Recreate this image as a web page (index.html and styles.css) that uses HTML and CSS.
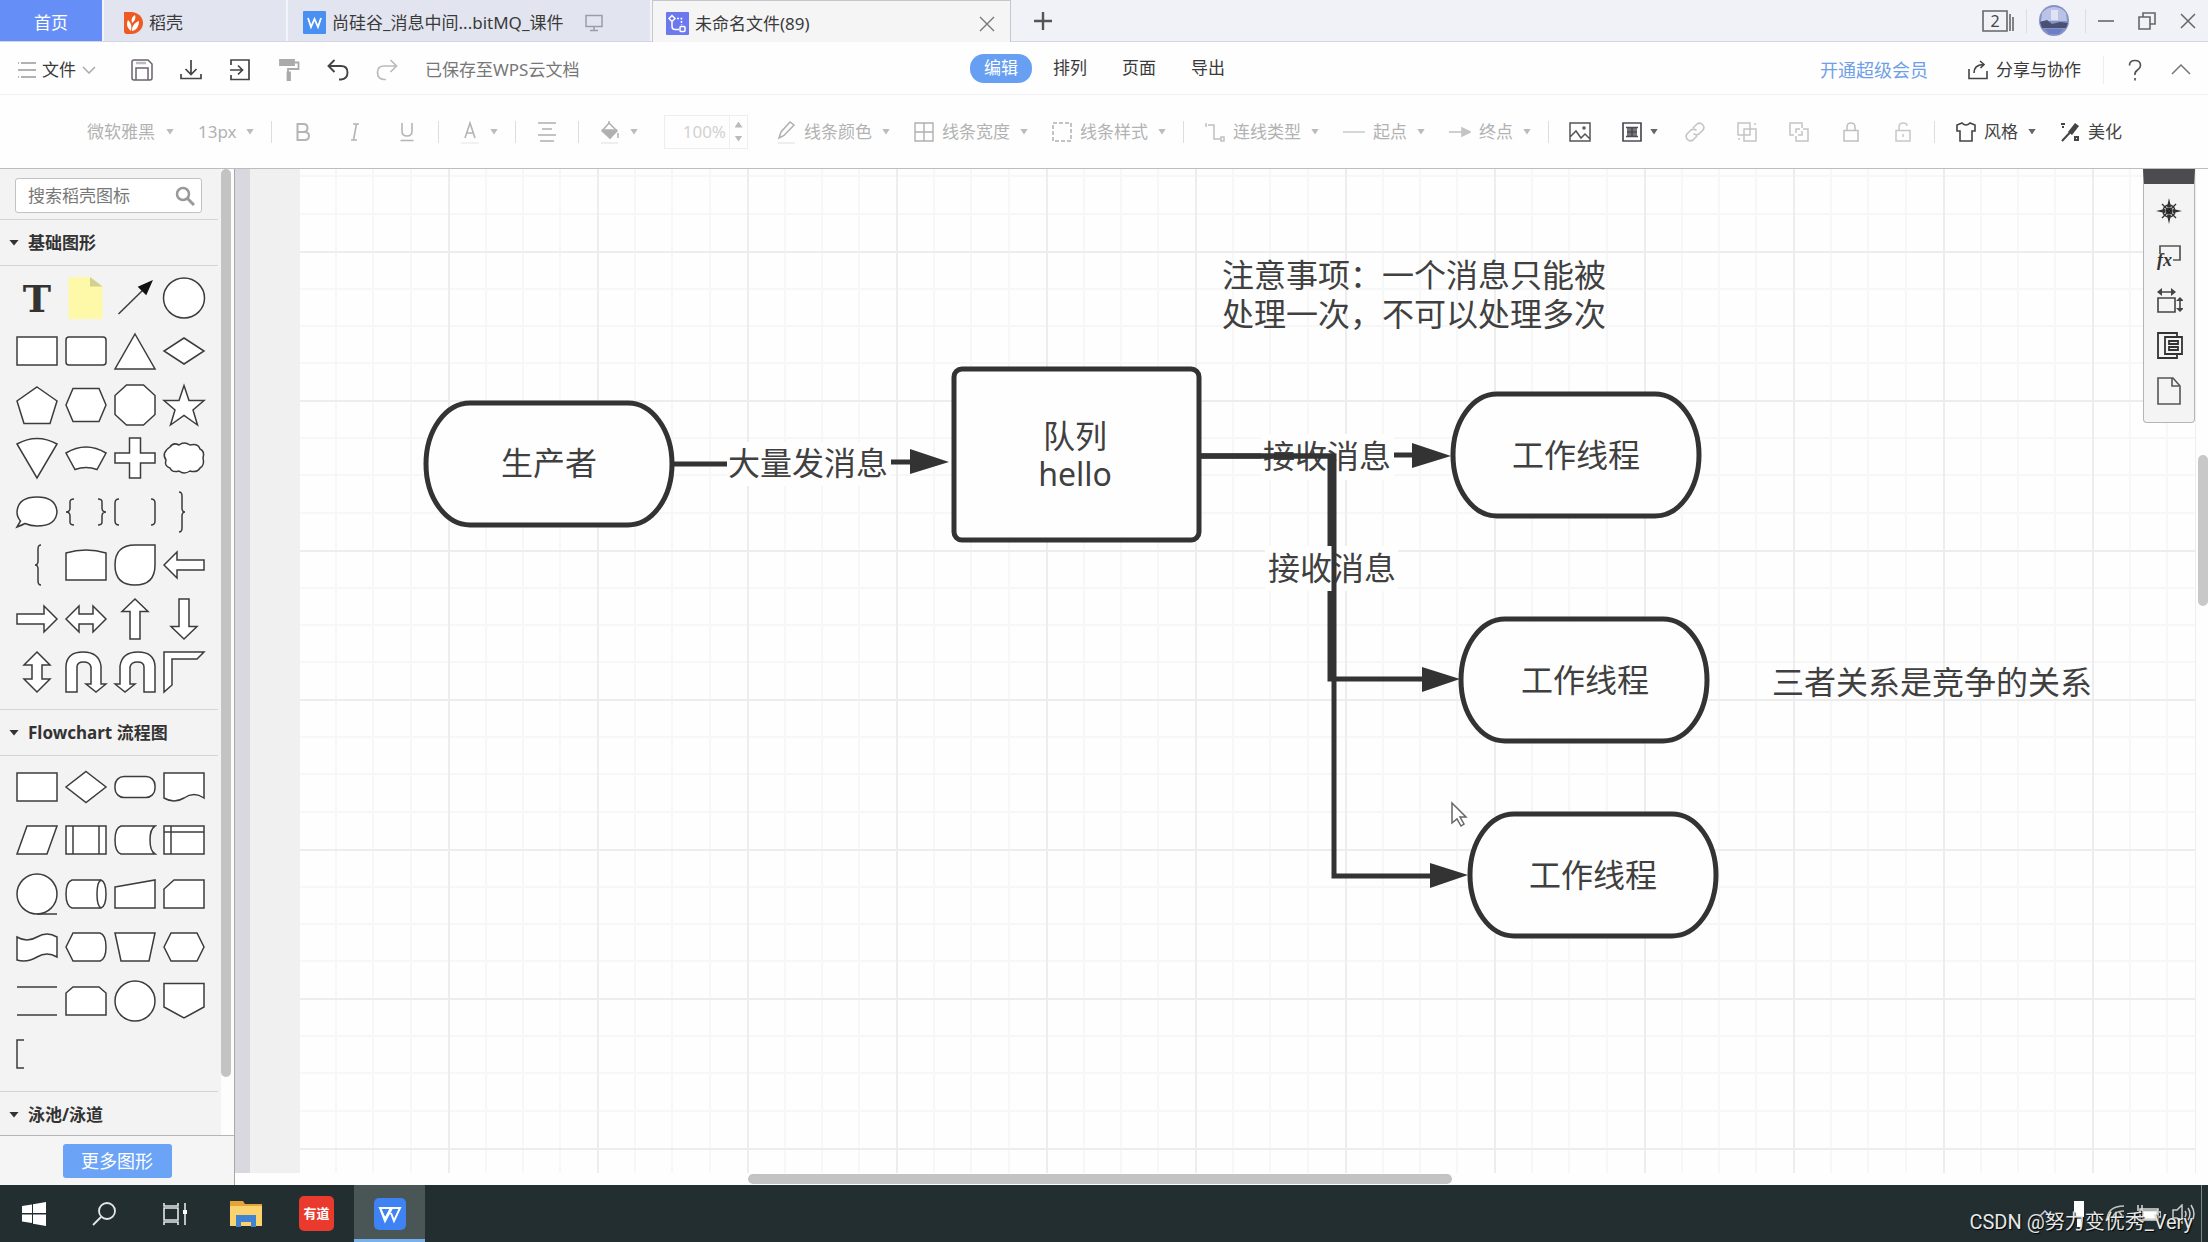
FILE: index.html
```html
<!DOCTYPE html>
<html lang="zh-CN">
<head>
<meta charset="utf-8">
<title>未命名文件(89)</title>
<link rel="stylesheet" href="styles.css">
</head>
<body>
<header class="tabbar">
  <a class="tab tab-home" href="#">首页</a>
  <a class="tab tab-docer" href="#">
    <svg class="ic" width="20" height="24" viewBox="0 0 20 24"><path d="M1 1h7c7 0 12 5 12 11s-5 11-12 11H4c-2 0-3-1-3-3z" fill="#ee5a24"/><path d="M8 20c-4-3-5-7-3-11 3 3 4 6 3 11zm1 0c0-5 2-8 7-10 0 5-2 9-7 10zm0-8c-1-4 0-6 3-8 1 3 0 6-3 8z" fill="#fff"/></svg>
    <span>稻壳</span>
  </a>
  <a class="tab tab-doc" href="#">
    <svg class="ic" width="23" height="23" viewBox="0 0 23 23"><rect width="23" height="23" rx="1" fill="#4a90f0"/><path d="M5 7l3 9 3.500-8 3.500 8 3-9" fill="none" stroke="#fff" stroke-width="1.800"/></svg>
    <span>尚硅谷_消息中间...bitMQ_课件</span>
    <svg class="ic monitor" width="18" height="18" viewBox="0 0 18 18" fill="none" stroke="#9a9ca6" stroke-width="1.500"><path d="M1 1.500h16v11H1zM9 13v3M5 16.500h8"/></svg>
  </a>
  <a class="tab tab-active" href="#">
    <svg class="ic" width="23" height="23" viewBox="0 0 23 23"><rect width="23" height="23" rx="1" fill="#6b78ee"/><g fill="none" stroke="#fff" stroke-width="1.500"><path d="M6 3.500l3 3-3 3-3-3zM6 9.500v5q0 3 3 3h4"/><rect x="14" y="14.500" width="5" height="5" rx="1"/><path d="M11 6.500h4.500V13" stroke-dasharray="2 1.500"/></g></svg>
    <span>未命名文件(89)</span>
    <svg class="ic tab-close" width="16" height="16" viewBox="0 0 16 16" stroke="#777" stroke-width="1.400"><path d="M1 1l14 14M15 1L1 15"/></svg>
  </a>
  <button class="tab-add" aria-label="新建"><svg width="18" height="18" viewBox="0 0 18 18" stroke="#555" stroke-width="2.400"><path d="M9 0v18M0 9h18"/></svg></button>
  <div class="window-tools">
    <button class="plain" aria-label="窗口列表"><svg width="32" height="22" viewBox="0 0 32 22" fill="none" stroke="#666" stroke-width="1.600"><path d="M1 1h24v20H1zM28 4v17M31 7v14"/><text x="13" y="17" text-anchor="middle" class="count">2</text></svg></button>
    <span class="vline"></span>
    <svg class="avatar" width="30" height="31" viewBox="0 0 30 31"><ellipse cx="15" cy="15.500" rx="15" ry="15.500" fill="#8792c4"/><path d="M3 8a15 15 0 0 1 24 0l1 8H2z" fill="#b9c3e8"/><path d="M12 5h7v10h-7z" fill="#dfe3f2"/><path d="M1 17l7-2 5 4 8-2 8 1-2 5H3z" fill="#4a5073"/><path d="M6 24h18l-4 5H10z" fill="#6e7ec6"/></svg>
    <span class="vline"></span>
    <button class="plain" aria-label="最小化"><svg width="16" height="16" viewBox="0 0 16 16" stroke="#666" stroke-width="1.600"><path d="M0 8h16"/></svg></button>
    <button class="plain" aria-label="还原"><svg width="18" height="18" viewBox="0 0 18 18" fill="none" stroke="#666" stroke-width="1.600"><path d="M1 5h11v12H1zM5 5V1h12v11h-5"/></svg></button>
    <button class="plain" aria-label="关闭"><svg width="16" height="16" viewBox="0 0 16 16" stroke="#666" stroke-width="1.500"><path d="M1 1l14 14M15 1L1 15"/></svg></button>
  </div>
</header>

<div class="menubar">
  <div class="menu-left">
    <button class="file-menu">
      <svg width="18" height="16" viewBox="0 0 18 16" stroke="#999" stroke-width="1.300"><path d="M3 1h15M0 8h18M3 15h15M0 1h1M0 15h1"/></svg>
      <span>文件</span>
      <svg class="chev" width="14" height="8" viewBox="0 0 14 8" fill="none" stroke="#aaa" stroke-width="1.500"><path d="M1 1l6 6 6-6"/></svg>
    </button>
    <button class="quick" aria-label="保存"><svg width="22" height="22" viewBox="0 0 22 22" fill="none" stroke="#6b626e" stroke-width="1.500"><path d="M1 3q0-2 2-2h14l4 4v14q0 2-2 2H3q-2 0-2-2zM5 21V9h12v12"/><path d="M5 4h10" stroke="#bbb" stroke-width="2.500"/></svg></button>
    <button class="quick" aria-label="下载"><svg width="22" height="22" viewBox="0 0 22 22" fill="none" stroke="#444" stroke-width="1.700"><path d="M11 1v14M5.500 10l5.500 5.500 5.500-5.500M1 15v4.500h20V15"/></svg></button>
    <button class="quick" aria-label="输出"><svg width="22" height="22" viewBox="0 0 22 22" fill="none" stroke="#444" stroke-width="1.700"><path d="M2 6V1h18v19.500H2V16M1 11h12M9 6.500l4.500 4.500L9 15.500"/></svg></button>
    <button class="quick" aria-label="格式刷"><svg width="22" height="22" viewBox="0 0 22 22" fill="none" stroke="#aaa" stroke-width="1.800"><path d="M2 1h14v5H2z" fill="#aaa"/><path d="M17 3.500h3.500V10H10v4"/><path d="M9.500 13.500h2.500v7.500H9.500z" fill="#aaa"/></svg></button>
    <button class="quick" aria-label="撤销"><svg width="22" height="22" viewBox="0 0 22 22" fill="none" stroke="#444" stroke-width="1.900"><path d="M7.500 1L1.500 7l6 6M2 7h12q6.500 0 6.500 6.500T14 20.500h-2"/></svg></button>
    <button class="quick" aria-label="重做"><svg width="22" height="22" viewBox="0 0 22 22" fill="none" stroke="#bbb" stroke-width="1.700"><path d="M14.500 1l6 6-6 6M20 7H8Q1.500 7 1.500 13.500T8 20.500h2"/></svg></button>
    <span class="saved">已保存至WPS云文档</span>
  </div>
  <nav class="menu-tabs">
    <button class="mtab mtab-on">编辑</button>
    <button class="mtab">排列</button>
    <button class="mtab">页面</button>
    <button class="mtab">导出</button>
  </nav>
  <div class="menu-right">
    <a class="vip" href="#">开通超级会员</a>
    <button class="share">
      <svg width="20" height="20" viewBox="0 0 20 20" fill="none" stroke="#444" stroke-width="1.600"><path d="M1 9v9.500h18V11M6 13q0-8 9-8.500M12 1l4 3.500L12.500 8"/></svg>
      <span>分享与协作</span>
    </button>
    <span class="vline"></span>
    <button class="plain" aria-label="帮助"><svg width="14" height="22" viewBox="0 0 14 22" fill="none" stroke="#555" stroke-width="1.700"><path d="M1.500 6.500Q1.500 1.500 7 1.500t5.500 5Q12.500 9 9.500 11T7 16M7 19v2.500"/></svg></button>
    <button class="plain" aria-label="收起"><svg width="20" height="11" viewBox="0 0 20 11" fill="none" stroke="#777" stroke-width="1.500"><path d="M1 10l9-9 9 9"/></svg></button>
  </div>
</div>

<div class="toolbar">
  <label class="drop"><select class="pick pick-font" aria-label="字体"><option>微软雅黑</option></select><i class="caret"></i></label>
  <label class="drop"><select class="pick pick-size" aria-label="字号"><option>13px</option></select><i class="caret"></i></label>
  <span class="sep"></span>
  <button class="tool" aria-label="加粗"><svg width="20" height="20" viewBox="0 0 20 20" fill="none" stroke="#b4b4b4" stroke-width="2"><path d="M4.500 2h6q4 0 4 4t-4 4h-6zM4.500 10h7q4.500 0 4.500 4t-4.500 4h-7z"/></svg></button>
  <button class="tool" aria-label="倾斜"><svg width="20" height="20" viewBox="0 0 20 20" fill="none" stroke="#b4b4b4" stroke-width="1.600"><path d="M8 2h6M6 18h6M11.500 2l-3 16"/></svg></button>
  <button class="tool" aria-label="下划线"><svg width="20" height="20" viewBox="0 0 20 20" fill="none" stroke="#b4b4b4" stroke-width="1.600"><path d="M5 1v8q0 5 5 5t5-5V1M3.500 18.500h13"/></svg></button>
  <span class="sep"></span>
  <button class="drop" aria-label="文字颜色"><svg width="20" height="24" viewBox="0 0 20 24" fill="none" stroke="#b4b4b4" stroke-width="1.600"><path d="M5 18l5-15 5 15M6.500 13h7"/><path d="M1 23h18" stroke="#eee"/></svg><i class="caret"></i></button>
  <span class="sep"></span>
  <button class="tool" aria-label="对齐"><svg width="20" height="20" viewBox="0 0 20 20" stroke="#b0b0b0" stroke-width="1.500"><path d="M1 1h18M5 7h10M1 13h18M3 19h14"/></svg></button>
  <span class="sep"></span>
  <button class="drop" aria-label="填充"><svg width="20" height="24" viewBox="0 0 20 24" fill="none" stroke="#b0b0b0" stroke-width="1.500"><path d="M9 3l8 8-7 7-8-7z"/><path d="M3 10h13l-6 8z" fill="#b0b0b0"/><path d="M9 3V1M18 13v5" /><path d="M1 23h17" stroke="#e8e8e8"/></svg><i class="caret"></i></button>
  <div class="spin"><input type="text" value="100%" aria-label="不透明度"><span class="steps"><i class="caret up"></i><i class="caret"></i></span></div>
  <button class="drop"><svg width="20" height="24" viewBox="0 0 20 24" fill="none" stroke="#b0b0b0" stroke-width="1.500"><path d="M3 18l2-6L14 2l4 3L8 15.500z"/><path d="M2 23h17" stroke="#e8e8e8"/></svg><span>线条颜色</span><i class="caret"></i></button>
  <button class="drop"><svg width="20" height="20" viewBox="0 0 20 20" fill="none" stroke="#b0b0b0" stroke-width="1.400"><path d="M1 1h18v18H1zM10 1v18M1 10h18"/></svg><span>线条宽度</span><i class="caret"></i></button>
  <button class="drop"><svg width="20" height="20" viewBox="0 0 20 20" fill="none" stroke="#b0b0b0" stroke-width="1.500" stroke-dasharray="4 2"><path d="M1 1h18v18H1z"/></svg><span>线条样式</span><i class="caret"></i></button>
  <span class="sep"></span>
  <button class="drop"><svg width="20" height="20" viewBox="0 0 20 20" fill="none" stroke="#c0c0c0" stroke-width="1.500"><path d="M1 1v3h1M3 3h6v14h7M16 15h3v4h-3z"/></svg><span>连线类型</span><i class="caret"></i></button>
  <button class="drop"><svg width="22" height="20" viewBox="0 0 22 20" stroke="#ccc" stroke-width="1.600"><path d="M0 10h22"/></svg><span>起点</span><i class="caret"></i></button>
  <button class="drop"><svg width="22" height="20" viewBox="0 0 22 20" stroke="#c4c4c4" stroke-width="1.600"><path d="M0 10h16"/><path d="M13 6l8 4-8 4z" fill="#c4c4c4"/></svg><span>终点</span><i class="caret"></i></button>
  <span class="sep"></span>
  <button class="tool" aria-label="图片"><svg width="22" height="20" viewBox="0 0 22 20" fill="none" stroke="#555" stroke-width="1.500"><path d="M1 1h20v18H1zM1 15l6-6 5 7 4-4 5 5"/><circle cx="15" cy="6" r="1"/></svg></button>
  <button class="tool" aria-label="容器"><svg width="20" height="20" viewBox="0 0 20 20" fill="none" stroke="#4c4c55" stroke-width="1.700"><path d="M1 1h18v18H1z"/><path d="M5 5h10v10H5z" fill="#777" stroke="none"/><path d="M4 5.500h12M5 10h10M4 14.500h12M10 5v10"/></svg><i class="caret dark"></i></button>
  <button class="tool link" aria-label="链接"><svg width="20" height="20" viewBox="0 0 20 20" fill="none" stroke="#c4c4c4" stroke-width="1.600"><path d="M8 6l4-4q3-2 5.500.5T18 8l-4 4q-3 2-5.500-.5M12 14l-4 4q-3 2-5.500-.5T2 12l4-4q3-2 5.500.5"/></svg></button>
  <button class="tool" aria-label="组合"><svg width="20" height="20" viewBox="0 0 20 20" fill="none" stroke="#c4c4c4" stroke-width="1.500"><path d="M1 1h12v12H1zM7 7h12v12H7z"/><path d="M18 1v2M1 17h2"/></svg></button>
  <button class="tool" aria-label="取消组合"><svg width="20" height="20" viewBox="0 0 20 20" fill="none" stroke="#c4c4c4" stroke-width="1.500"><path d="M5 13H1V1h12v5M14 7h5v12H7v-5M7 11V7h4M13 9v4H9"/></svg></button>
  <button class="tool" aria-label="锁定"><svg width="16" height="20" viewBox="0 0 16 20" fill="none" stroke="#c0c0c0" stroke-width="1.500"><path d="M1 8.500h14V19H1zM4 8V5q0-4 4-4t4 4v3"/></svg></button>
  <button class="tool" aria-label="解锁"><svg width="16" height="20" viewBox="0 0 16 20" fill="none" stroke="#c8c8c8" stroke-width="1.500"><path d="M1 8.500h14V19H1zM4 8V5q0-4 4-4t4 3M8 12v3"/></svg></button>
  <span class="sep"></span>
  <button class="drop strong"><svg width="20" height="20" viewBox="0 0 20 20" fill="none" stroke="#444" stroke-width="1.600"><path d="M6 1L1 3v6h3v10h12V9h3V3l-5-2q-4 4-8 0z"/></svg><span>风格</span><i class="caret dark"></i></button>
  <button class="drop strong"><svg width="20" height="20" viewBox="0 0 20 20" fill="none" stroke="#444" stroke-width="2"><path d="M2 19L16 4"/><path d="M8 10l7-9 4 3-7 9z" fill="#444" stroke="none"/><path d="M1 2h4M2 5h2M15 15h3v3h-3z"/></svg><span>美化</span></button>
</div>

<main class="workspace">
  <aside class="sidebar">
    <div class="library">
      <div class="lib-content">
        <div class="search"><div class="search-box"><input type="text" placeholder="搜索稻壳图标" aria-label="搜索稻壳图标"><svg width="20" height="20" viewBox="0 0 20 20" fill="none" stroke="#999" stroke-width="2.500"><circle cx="8" cy="8" r="6"/><path d="M12.500 12.500L19 19" stroke-width="3"/></svg></div></div>
        <h2 class="lib-title"><i class="fold"></i>基础图形</h2>
        <div class="shapes shapes-basic">
          <svg viewBox="0 0 44 44"><text x="22" y="36" class="glyph-t">T</text></svg>
          <svg viewBox="0 0 44 44"><path d="M4.500 1h22l12 9v33h-34z" fill="#fdf9a9" stroke="none"/><path d="M26 1l12.500 9.500H26z" fill="#d3cf92" stroke="none"/></svg>
          <svg viewBox="0 0 44 44"><path d="M5.500 38L30 14"/><path d="M38.500 5.500L33 18l-7-7z" fill="#111" stroke="#111"/></svg>
          <svg viewBox="0 0 44 44"><ellipse cx="22" cy="22" rx="20.500" ry="20"/></svg>
          <svg viewBox="0 0 44 44"><path d="M2 8h40v28H2z"/></svg>
          <svg viewBox="0 0 44 44"><rect x="2" y="8" width="40" height="28" rx="3"/></svg>
          <svg viewBox="0 0 44 44"><path d="M22 5l20 35H2z"/></svg>
          <svg viewBox="0 0 44 44"><path d="M22 9l20 13-20 13L2 22z"/></svg>
          <svg viewBox="0 0 44 44"><path d="M22 4l20 14-7 22.500H9L2 18z"/></svg>
          <svg viewBox="0 0 44 44"><path d="M2 22L9 5.500h26L42 22l-7 16.500H9z"/></svg>
          <svg viewBox="0 0 44 44"><path d="M13.500 2h17L42 12.500v19L30.500 42h-17L2 31.500v-19z"/></svg>
          <svg viewBox="0 0 44 44"><path d="M22 2.500l5 15h15L31 27l4.500 15L22 32.500 8.500 42 13 27 2 17.500h15z"/></svg>
          <svg viewBox="0 0 44 44"><path d="M2 8Q22-3 42 8L22 42z"/></svg>
          <svg viewBox="0 0 44 44"><path d="M2 17Q22 5 42 17l-9 16.500q-11-4-22 0z"/></svg>
          <svg viewBox="0 0 44 44"><path d="M16.500 2h11v15H42v10H27.500v15h-11V27H2V17h14.500z"/></svg>
          <svg viewBox="0 0 44 44"><path d="M8 11q3-5 9-2 5-4 11 0 8-2 10 4 5 2 3 9 2 7-3 10-3 5-10 3-6 4-11 0-7 2-9-3-6-2-4-8-5-7 4-13z"/></svg>
          <svg viewBox="0 0 44 44"><path d="M2 37l3.500-6Q2 27 2 22 3 7 22 7t20 15q-1 14-20 14-6 0-12-2.500Q7 35 2 37z"/></svg>
          <svg viewBox="0 0 44 44"><path fill="none" d="M10 9q-4 0-4 3v6q0 4-4 4 4 0 4 4v6q0 3 4 3M34 9q4 0 4 3v6q0 4 4 4-4 0-4 4v6q0 3-4 3"/></svg>
          <svg viewBox="0 0 44 44"><path fill="none" d="M6 9q-4 0-4 4v18q0 4 4 4M38 9q4 0 4 4v18q0 4-4 4"/></svg>
          <svg viewBox="0 0 44 44"><path fill="none" d="M17 2q3 0 3 4v12q0 4 3 4-3 0-3 4v12q0 4-3 4"/></svg>
          <svg viewBox="0 0 44 44"><path fill="none" d="M26 2q-3 0-3 4v12q0 4-3 4 3 0 3 4v12q0 4 3 4"/></svg>
          <svg viewBox="0 0 44 44"><path d="M2 10Q22 4 42 10v27H2z"/></svg>
          <svg viewBox="0 0 44 44"><path d="M22 2h20v20q0 20-20 20T2 22Q2 2 22 2z"/></svg>
          <svg viewBox="0 0 44 44"><path d="M2 22L15 9v8h27v10H15v8z"/></svg>
          <svg viewBox="0 0 44 44"><path d="M42 22L29 9v8H2v10h27v8z"/></svg>
          <svg viewBox="0 0 44 44"><path d="M2 22L15 9v8h14V9l13 13-13 13v-8H15v8z"/></svg>
          <svg viewBox="0 0 44 44"><path d="M22 2l13 12.500h-8V42H17V14.500H9z"/></svg>
          <svg viewBox="0 0 44 44"><path d="M22 42l13-12.500h-8V2H17v27.500H9z"/></svg>
          <svg viewBox="0 0 44 44"><path d="M22 2l13 13h-8v14h8L22 42 9 29h8V15H9z"/></svg>
          <svg viewBox="0 0 44 44"><path d="M2 42V16Q3 2 19 2t18 14v18h5l-10 8-10-8h5V17q-1-5-7.500-5T13 17v25z"/></svg>
          <svg viewBox="0 0 44 44"><path d="M42 42V16Q41 2 25 2T7 16v18H2l10 8 10-8h-5V17q1-5 7.500-5t6.500 5v25z"/></svg>
          <svg viewBox="0 0 44 44"><path d="M2 2h40l-7 7H10v26l-8 7z"/></svg>
        </div>
        <h2 class="lib-title"><i class="fold"></i>Flowchart 流程图</h2>
        <div class="shapes shapes-flow">
          <svg viewBox="0 0 44 44"><path d="M2 8h40v28H2z"/></svg>
          <svg viewBox="0 0 44 44"><path d="M22 6.500l20 15.500-20 15.500L2 22z"/></svg>
          <svg viewBox="0 0 44 44"><rect x="2" y="11.500" width="40" height="21" rx="9"/></svg>
          <svg viewBox="0 0 44 44"><path d="M2 8h40v25q-10-7-20 0-10 6-20 0z"/></svg>
          <svg viewBox="0 0 44 44"><path d="M12 8h30l-10 28H2z"/></svg>
          <svg viewBox="0 0 44 44"><path d="M2 8h40v28H2zM9 8v28M35 8v28"/></svg>
          <svg viewBox="0 0 44 44"><path d="M42 8H8q-6 2-6 14t6 14h34q-5-3-5-14t5-14z"/></svg>
          <svg viewBox="0 0 44 44"><path d="M2 8h40v28H2zM9 8v28M2 14h40"/></svg>
          <svg viewBox="0 0 44 44"><circle cx="22" cy="22" r="20"/><path d="M22 42h20"/></svg>
          <svg viewBox="0 0 44 44"><path d="M8 8h29q5 2 5 14t-5 14H8q-6-2-6-14T8 8z"/><path fill="none" d="M37 8q-4 2-4 14t4 14"/></svg>
          <svg viewBox="0 0 44 44"><path d="M2 15l40-7v28H2z"/></svg>
          <svg viewBox="0 0 44 44"><path d="M12 8h30v28H2V17z"/></svg>
          <svg viewBox="0 0 44 44"><path d="M2 12q10 6 20 0t20 0v20q-10-6-20 0t-20 3z"/></svg>
          <svg viewBox="0 0 44 44"><path d="M2 22L9 8h27q6 2 6 14t-6 14H9z"/></svg>
          <svg viewBox="0 0 44 44"><path d="M2 8h40l-6 28H8z"/></svg>
          <svg viewBox="0 0 44 44"><path d="M2 22L9 8h26l7 14-7 14H9z"/></svg>
          <svg viewBox="0 0 44 44"><path d="M2 8h40M2 36h40"/></svg>
          <svg viewBox="0 0 44 44"><path d="M9 8h26l7 6v22H2V14z"/></svg>
          <svg viewBox="0 0 44 44"><circle cx="22" cy="22" r="20"/></svg>
          <svg viewBox="0 0 44 44"><path d="M2 4.500h40V28L22 39 2 28z"/></svg>
          <svg viewBox="0 0 44 44"><path fill="none" d="M9 8H2v28h7"/></svg>
        </div>
        <h2 class="lib-title"><i class="fold"></i>泳池/泳道</h2>
      </div>
      <div class="lib-scroll"><i class="lib-thumb"></i></div>
    </div>
    <div class="lib-footer"><button class="more">更多图形</button></div>
  </aside>

  <section class="editor">
    <div class="editor-row">
      <div class="rail"></div>
      <div class="gutter"></div>
      <div class="canvas">
        <svg class="diagram" width="100%" height="100%">
          <defs>
            <pattern id="grid" x="448" y="251" width="299" height="299" patternUnits="userSpaceOnUse">
              <path class="minor" d="M38 0v299M75 0v299M112 0v299M187 0v299M224 0v299M262 0v299M0 38h299M0 75h299M0 112h299M0 187h299M0 224h299M0 262h299"/>
              <path class="major" d="M1 0v299M150 0v299M0 1h299M0 150h299"/>
            </pattern>
          </defs>
          <g transform="translate(-300 -169)">
            <rect x="300" y="169" width="100%" height="100%" fill="url(#grid)"/>
            <g class="wire">
              <path d="M673 464h54M891 462h21"/>
              <path class="head" d="M910 449l39 13-39 12z"/>
              <path d="M1200 456h70M1394 455h20"/>
              <path class="head" d="M1412 443l39 13-39 12z"/>
            </g>
            <g class="node">
              <path d="M470 403H628A44 61 0 0 1 628 525H470A44 61 0 0 1 470 403z"/>
              <rect x="954" y="369" width="245" height="171" rx="8"/>
              <path d="M1497 394H1655A44 61 0 0 1 1655 516H1497A44 61 0 0 1 1497 394z"/>
              <path d="M1505 619H1663A44 61 0 0 1 1663 741H1505A44 61 0 0 1 1505 619z"/>
              <path d="M1514 814H1672A44 61 0 0 1 1672 936H1514A44 61 0 0 1 1514 814z"/>
            </g>
            <rect class="plate" x="727" y="442" width="164" height="44"/>
            <rect class="plate" x="1261" y="434" width="133" height="46"/>
            <g class="words">
              <text x="549" y="475">生产者</text>
              <text x="808" y="475">大量发消息</text>
              <text x="1075" y="448">队列</text>
              <text x="1075" y="486">hello</text>
              <text x="1327" y="468">接收消息</text>
              <text x="1576" y="467">工作线程</text>
              <text x="1585" y="692">工作线程</text>
              <text x="1593" y="887">工作线程</text>
              <text x="1932" y="694">三者关系是竞争的关系</text>
              <text x="1414" y="287">注意事项：一个消息只能被</text>
              <text x="1414" y="326">处理一次，不可以处理多次</text>
            </g>
            <g class="wire">
              <path d="M1200 456h130v223h94"/>
              <path class="head" d="M1422 667l38 12-38 13z"/>
            </g>
            <rect class="plate" x="1265" y="546" width="133" height="45"/>
            <g class="words"><text x="1332" y="580">接收消息</text></g>
            <g class="wire">
              <path d="M1200 456h134v420h98"/>
              <path class="head" d="M1430 863l38 12-38 13z"/>
            </g>
            <path class="pointer" d="M1452 803v20l5-4 4 7 3-2-4-7h6z"/>
          </g>
        </svg>
        <div class="dock">
          <button aria-label="导航"><svg width="28" height="28" viewBox="0 0 28 28" fill="none" stroke="#333" stroke-width="1.400"><circle cx="14" cy="14" r="6"/><circle cx="14" cy="14" r="3" fill="#111"/><path d="M14 1l2 9h-4zM14 27l2-9h-4zM1 14l9-2v4zM27 14l-9-2v4z" fill="#333" stroke="none"/><path d="M7 7l14 14M21 7L7 21"/></svg></button>
          <button aria-label="公式"><svg width="28" height="28" viewBox="0 0 28 28" fill="none" stroke="#555" stroke-width="1.700"><path d="M5 12V4h20v14h-7"/><text x="2" y="24" class="fx">fx</text></svg></button>
          <button aria-label="尺寸"><svg width="28" height="28" viewBox="0 0 28 28" fill="none" stroke="#444" stroke-width="1.600"><path d="M3 11h17v14H3zM3 5h17M25 11v13"/><path d="M7 1L2 5l5 4zM16 1l5 4-5 4zM21 14l4-4 4 4zM21 21l4 4 4-4z" fill="#444" stroke="none"/></svg></button>
          <button aria-label="数据"><svg width="28" height="28" viewBox="0 0 28 28" fill="none" stroke="#333" stroke-width="1.800"><path d="M22 5V1H3v25h19v-3"/><path d="M10 5h17v17H10zM14 9h9v3h-9zM14 15h9v3h-9z"/></svg></button>
          <button aria-label="页面"><svg width="28" height="28" viewBox="0 0 28 28" fill="none" stroke="#555" stroke-width="1.600"><path d="M3 1h15l7 8v18H3z"/><path d="M17 1v8h7"/></svg></button>
        </div>
      </div>
      <div class="vscroll"><i class="vthumb"></i></div>
    </div>
    <div class="hscroll"><i class="hthumb"></i></div>
  </section>
</main>

<footer class="taskbar">
  <button class="task" aria-label="开始"><svg width="24" height="24" viewBox="0 0 24 24" fill="#fff"><path d="M0 4l10-1.500V11H0zM11 2.300L24 0v11H11zM0 12.500h10V21L0 19.500zM11 12.500h13V24l-13-2.300z"/></svg></button>
  <button class="task" aria-label="搜索"><svg width="24" height="24" viewBox="0 0 24 24" fill="none" stroke="#e4e8e8" stroke-width="1.800"><circle cx="15" cy="9" r="8"/><path d="M9 15l-8 8"/></svg></button>
  <button class="task" aria-label="任务视图"><svg width="24" height="24" viewBox="0 0 24 24" fill="none" stroke="#e4e8e8" stroke-width="1.600"><path d="M1 6h14v12H1zM1 1v3h14V1M1 23v-3h14v3M22 1v7M22 12v11"/><path d="M20 8h4v4h-4z" fill="#fff" stroke="none"/></svg></button>
  <button class="task" aria-label="文件资源管理器"><svg width="32" height="26" viewBox="0 0 32 26"><path d="M0 0h13l2 3h17v22H0z" fill="#e5a33a"/><path d="M0 5h32v20H0z" fill="#fad36e"/><path d="M6 14h20v12h-5v-5H11v5H6z" fill="#3f83d2"/></svg></button>
  <button class="task" aria-label="有道"><span class="youdao">有道</span></button>
  <button class="task task-on" aria-label="WPS"><svg width="32" height="32" viewBox="0 0 32 32"><rect width="32" height="32" rx="5" fill="#3f82f4"/><path d="M6 10h11l-6 11zM6 10l5 13 7-13h8l-6 13-3-8" fill="none" stroke="#fff" stroke-width="2"/></svg></button>
  <div class="tray">
    <svg width="14" height="8" viewBox="0 0 14 8" fill="none" stroke="#ccd" stroke-width="1.500"><path d="M1 7l6-6 6 6"/></svg>
    <svg class="usb" width="12" height="26" viewBox="0 0 12 26"><path d="M1 0h10v16H8v10H4V16H1z" fill="#fff"/></svg>
    <svg width="20" height="20" viewBox="0 0 20 20" fill="none" stroke="#bcc4c4" stroke-width="1.500"><path d="M1 17Q1 2 18 2M6 18Q6 7 18 7M11 18q0-6 7-6"/></svg>
    <svg width="24" height="20" viewBox="0 0 24 20" fill="none" stroke="#ddd" stroke-width="1.500"><path d="M3 5h18v11H3zM22 8h2v5h-2M1 1v6M5 1v6"/><path d="M6 7h14v8H6z" fill="#fff"/></svg>
    <svg width="24" height="20" viewBox="0 0 24 20" fill="none" stroke="#ccc" stroke-width="1.500"><path d="M1 6h4l5-5v18l-5-5H1zM13 7q2 3 0 6M16 4q4 6 0 12M19 1q6 9 0 18"/></svg>
  </div>
  <p class="credit">CSDN @努力变优秀_Very</p>
</footer>
</body>
</html>
```
FILE: styles.css
```css
* { box-sizing: border-box; }
body {
  margin: 0;
  height: 100vh;
  display: flex;
  flex-direction: column;
  overflow: hidden;
  background: #fefefe;
  color: #3a3a3a;
  font: 17px/24px "Noto Sans", "Noto Sans CJK SC", sans-serif;
}
button, input, select { font: inherit; color: inherit; }
button { display: flex; align-items: center; justify-content: center; padding: 0; border: 0; background: none; white-space: nowrap; }
a { color: inherit; text-decoration: none; }
svg { flex: none; display: block; }

/* document tabs */
.tabbar { display: flex; flex: none; height: 42px; background: #f1f2f8; border-bottom: 1px solid #d3d6e0; }
.tab { display: flex; align-items: center; gap: 6px; white-space: nowrap; background: #e2e5ef; border-right: 2px solid #f3f4f9; padding-top: 4px; }
.tab-home { width: 104px; justify-content: center; background: #658ff6; color: #fff; }
.tab-docer { width: 184px; padding-left: 19px; }
.tab-doc { width: 364px; padding-left: 15px; }
.monitor { margin-left: 16px; }
.tab-active { width: 359px; height: 42px; padding: 4px 15px 0 13px; background: #f5f5f6; border: 1px solid #c5c7cf; border-bottom: 0; }
.tab-close { margin-left: auto; }
.tab-add { width: 64px; }
.window-tools { display: flex; align-items: center; margin-left: auto; gap: 12px; padding-right: 12px; }
.window-tools .plain + .plain { margin-left: 12px; }
.avatar { margin-right: 4px; }
.vline { width: 1px; height: 24px; background: #dcdce2; }
.count { font-size: 16px; fill: #444; stroke: none; }

/* menu row */
.menubar { display: grid; grid-template-columns: 1fr auto 1fr; align-items: center; flex: none; height: 53px; padding: 0 17px 0 18px; border-bottom: 1px solid #f0f0f0; }
.menu-left, .menu-right, .menu-tabs { display: flex; align-items: center; }
.menu-left, .menu-right { padding-top: 3px; }
.file-menu { gap: 6px; margin-right: 21px; }
.quick { width: 49px; height: 32px; }
.saved { margin-left: 14px; color: #777; }
.menu-tabs { gap: 7px; }
.mtab { height: 29px; padding: 0 14px; border-radius: 14px; }
.mtab-on { background: #67a0f3; color: #fff; }
.menu-right { justify-content: flex-end; }
.vip { margin-right: 40px; font-size: 18px; color: #6f9fe8; }
.share { gap: 8px; margin-right: 22px; }
.menu-right .plain { margin-left: 24px; }
.menu-right .plain + .plain { margin-left: 29px; }
.menu-right .vline { height: 28px; background: #eee; }

/* format toolbar */
.toolbar { display: flex; align-items: center; flex: none; height: 74px; padding-left: 75px; border-bottom: 1px solid #bdbdbd; color: #b2b2b2; }
.drop { display: flex; align-items: center; gap: 8px; height: 36px; padding: 0 12px; white-space: nowrap; }
.drop .caret { margin-left: 2px; }
.pick { appearance: none; border: 0; padding: 0; background: none; }
.pick-font { width: 69px; }
.pick-size { width: 38px; }
.caret { width: 8px; height: 6px; background: #bbb; clip-path: polygon(0 0, 100% 0, 50% 100%); }
.caret.up { clip-path: polygon(50% 0, 100% 100%, 0 100%); }
.caret.dark { background: #666; }
.sep { width: 1px; height: 22px; margin: 0 5px; background: #ddd; }
.sep + .drop { margin-left: 4px; }
.tool { position: relative; width: 52px; height: 36px; }
.tool .caret { position: absolute; right: 0; }
.tool.link { margin-left: 11px; }
.spin { display: flex; width: 84px; height: 34px; margin: 0 16px 0 14px; border: 1px solid #eee; color: #d2d2d2; }
.spin input { width: 64px; border: 0; padding: 0 3px 0 0; background: none; text-align: right; }
.steps { display: flex; flex: 1; flex-direction: column; align-items: center; justify-content: center; gap: 8px; border-left: 1px solid #f0f0f0; }
.strong { color: #444; }

/* workspace */
.workspace { display: flex; flex: 1; min-height: 0; }
.sidebar { display: flex; flex-direction: column; flex: none; width: 235px; background: #f3f3f3; border-right: 1px solid #a8a8a8; }
.library { display: flex; flex: 1; min-height: 0; border-right: 2px solid #fdfdfd; }
.lib-content { flex: 1; overflow: hidden; padding-right: 3px; }
.search { padding: 9px 16px 6px 15px; }
.search-box { display: flex; align-items: center; height: 35px; padding: 0 6px 0 12px; background: #fff; border: 1px solid #c2c2c2; border-radius: 3px; }
.search input { flex: 1; min-width: 0; border: 0; padding: 0; background: none; }
.search input::placeholder { color: #777; opacity: 1; }
.lib-title { display: flex; align-items: center; gap: 9px; height: 47px; margin: 0; padding-left: 9px; border-top: 1px solid #d5d5d5; border-bottom: 1px solid #d5d5d5; font-size: 17px; line-height: 24px; color: #333; }
.fold { width: 10px; height: 6px; background: #333; clip-path: polygon(0 0, 100% 0, 50% 100%); }
.shapes { display: grid; grid-template-columns: repeat(4, 49px); grid-auto-rows: 1fr; align-items: center; justify-items: center; padding-left: 12px; }
.shapes-basic { height: 428px; margin: 5px 0 10px; }
.shapes-flow { height: 321px; margin: 4px 0 10px; }
.shapes svg { width: 44px; height: 44px; fill: #fff; stroke: #3c3c3c; stroke-width: 1.5; }
.shapes .glyph-t { font: bold 38px "DejaVu Serif", serif; text-anchor: middle; fill: #333; stroke: none; }
.lib-scroll { flex: none; width: 11px; background: #fdfdfd; }
.lib-thumb { display: block; width: 10px; height: 94%; border-radius: 5px; background: #c3c3c3; }
.lib-footer { display: flex; align-items: center; justify-content: center; flex: none; height: 50px; border-top: 1px solid #b5b5b5; background: #f5f5f5; }
.more { width: 109px; height: 34px; border-radius: 3px; background: #6ba3f7; color: #fff; font-size: 18px; }

.editor { display: flex; flex: 1; flex-direction: column; min-width: 0; }
.editor-row { display: flex; flex: 1; min-height: 0; }
.rail { flex: none; width: 15px; background: #d9d8df; }
.gutter { flex: none; width: 50px; background: #f0f0f1; }
.canvas { position: relative; flex: 1; min-width: 0; overflow: hidden; }
.diagram { position: absolute; inset: 0; }
.minor { fill: none; stroke: #f7f7f7; stroke-width: 2; }
.major { fill: none; stroke: #ededed; stroke-width: 2; }
.node { fill: #fefefe; stroke: #333; stroke-width: 5; }
.wire { fill: none; stroke: #333; stroke-width: 5; }
.wire .head { fill: #333; stroke: none; }
.plate { fill: #fefefe; }
.words { font-size: 32px; fill: #404040; text-anchor: middle; }
.pointer { fill: #fff; stroke: #666; stroke-width: 1.5; }

.dock { position: absolute; top: 0; right: 0; width: 52px; padding-bottom: 9px; background: #f4f4f4; border: 1px solid #b5b5b5; border-top: 15px solid #4c4c4e; border-radius: 0 0 4px 4px; }
.dock button { width: 100%; height: 45px; }
.dock button:first-child { margin-top: 4px; }
.fx { font: italic bold 18px "Liberation Serif", serif; fill: #333; stroke: none; }
.vscroll { display: flex; flex: none; width: 13px; padding: 286px 0 0 2px; border-left: 1px solid #eee; }
.vthumb { width: 10px; height: 151px; border-radius: 5px; background: #c8c8c8; }
.hscroll { display: flex; flex: none; height: 12px; padding: 1px 0 1px 513px; }
.hthumb { width: 704px; height: 10px; border-radius: 5px; background: #c3c3c3; }

/* system taskbar */
.taskbar { position: relative; display: flex; flex: none; height: 57px; background: #222e30; }
.task { width: 71px; height: 57px; }
.task:first-child { width: 68px; }
.task-on { margin-left: 2px; background: #4a5556; border-bottom: 3px solid #76b2ee; padding-top: 3px; }
.youdao { width: 35px; height: 35px; border-radius: 5px; background: #ea3a2e; color: #fff; font-size: 13px; font-weight: bold; line-height: 34px; text-align: center; }
.tray { display: flex; align-items: center; gap: 11px; margin-left: auto; padding-right: 5px; margin-right: 6px; border-right: 1px solid #7b8586; }
.usb { margin: 0 10px; }
.credit { position: absolute; right: 15px; bottom: 8px; margin: 0; font: 20px/24px Roboto, "Noto Sans CJK SC", sans-serif; color: #e6e8e8; text-shadow: 1px 1px 1px #000; }
```
